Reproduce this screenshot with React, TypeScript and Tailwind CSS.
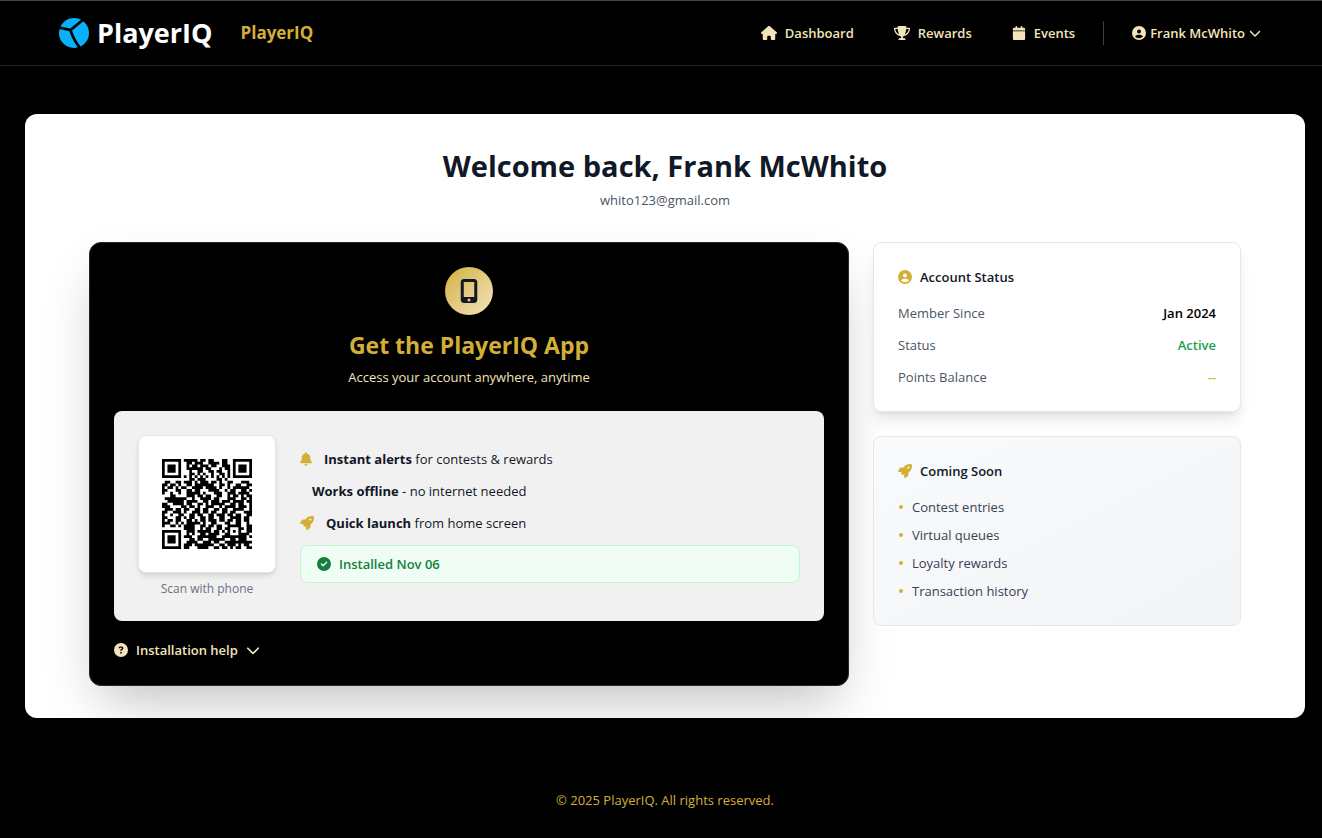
import type { ReactNode } from "react";
import {
  FaBell,
  FaCalendar,
  FaChevronDown,
  FaCircleCheck,
  FaCircleQuestion,
  FaCircleUser,
  FaHouse,
  FaMobileScreenButton,
  FaRocket,
  FaTrophy,
} from "react-icons/fa6";

const QR_ROWS = [
  "#######.#####.##.##...##..#######",
  "#.....#..##.###..####.##..#.....#",
  "#.###.#..#.##.###.##..###.#.###.#",
  "#.###.#..######.##...#.##.#.###.#",
  "#.###.#...#..##..##.##..#.#.###.#",
  "#.....#...##.#.#..#..##.#.#.....#",
  "#######.#.#.#.#.#.#.#.#.#.#######",
  "..........##.###....##.#.........",
  ".##..##.###.#.###.##.#..##...###.",
  "##.##.#..##.#######..##.#..##..##",
  "#.##.#.##..####.####.#..#.######.",
  "##...##..##.##...####..#.##..##.#",
  "#..#..#..#####.#...###..###.####.",
  "...##....###.##.##..##..#.##.#.##",
  ".########..#..####.##...###..##.#",
  "..######.####..##.###.###.####.##",
  "##..####.##..##.#.#####..##.##..#",
  "###....##.##.#..###..#.####.###.#",
  ".###.##.##..##.##..##.##..####..#",
  "##..###.#..###.##.##..##.##...###",
  "#..#..##..##.##..##.###.##.##..##",
  "##...##.#.##..##.##..##..####.##.",
  "#.##.##..##.#.##.###.##.##.##.##.",
  "###..#.#.#####.#..##...##..##..#.",
  "#..##.#.####..##.##.##..#####..##",
  "........####..#.##..##.##...##.##",
  "#######..###.#####.##.#.#.#.#..##",
  "#.....#..#.#..##.####..##...####.",
  "#.###.#.###..#######..#########.#",
  "#.###.#...##.##..######..##.###..",
  "#.###.#..####..###.##..##########",
  "#.....#.###.#######..##.###.#.##.",
  "#######.##...####..##.##.#.##..##",
];

const QR_PATH = QR_ROWS.map((row, y) =>
  [...row].map((cell, x) => (cell === "#" ? `M${x} ${y}h1v1h-1z` : "")).join(""),
).join("");

function QrCode() {
  return (
    <svg viewBox="0 0 33 33" className="size-[90px]" role="img" aria-label="QR code" shapeRendering="geometricPrecision">
      <path d={QR_PATH} fill="#000" />
    </svg>
  );
}

function LogoMark() {
  return (
    <svg viewBox="0 0 30 30" className="size-[30px]" aria-hidden="true">
      <circle cx="15" cy="15" r="15" fill="#08b2fb" />
      <path d="M0 9.500 L11.500 12 L25 1 M11.500 12 Q14 21 21 30" fill="none" stroke="#000" strokeWidth="2.800" />
    </svg>
  );
}

function NavLink({ icon, children }: { icon: ReactNode; children: ReactNode }) {
  return (
    <a href="#" className="flex items-center gap-2">
      {icon}
      {children}
    </a>
  );
}

function Feature({ icon, title, children }: { icon?: ReactNode; title: string; children: ReactNode }) {
  return (
    <li className="flex items-center gap-3">
      <span className="text-[#d4af37]">{icon}</span>
      <span>
        <strong className="font-bold">{title}</strong> {children}
      </span>
    </li>
  );
}

function StatusRow({ label, children }: { label: string; children: ReactNode }) {
  return (
    <div className="flex justify-between">
      <dt className="text-gray-600">{label}</dt>
      {children}
    </div>
  );
}

const UPCOMING = ["Contest entries", "Virtual queues", "Loyalty rewards", "Transaction history"];

export default function App() {
  return (
    <div className="min-h-screen bg-black font-['Open_Sans','Noto_Sans',sans-serif] text-[13px] leading-5 text-[#111827]">
      <header className="flex h-[66px] items-center border-t border-b border-t-[#444] border-b-[#1f2937] pr-[61px] pl-[59px]">
        <a href="#" className="flex items-center gap-2 text-[27px] leading-8 font-bold text-white">
          <LogoMark />
          PlayerIQ
        </a>
        <span className="ml-7 text-[17px] leading-7 font-bold text-[#d4af37]">PlayerIQ</span>
        <nav className="ml-auto flex items-center font-semibold text-[#f4e4bc]">
          <div className="flex items-center gap-10">
            <NavLink icon={<FaHouse className="size-4" />}>Dashboard</NavLink>
            <NavLink icon={<FaTrophy className="size-4" />}>Rewards</NavLink>
            <NavLink icon={<FaCalendar className="size-[14px]" />}>Events</NavLink>
          </div>
          <div className="ml-7 h-6 w-px bg-gray-700" />
          <button type="button" className="ml-7 flex items-center gap-1">
            <FaCircleUser className="size-[14px]" />
            Frank McWhito
            <FaChevronDown className="size-3" />
          </button>
        </nav>
      </header>

      <main className="py-12 pr-[17px] pl-[25px]">
        <div className="rounded-xl bg-white px-16 py-8">
          <div className="mb-8 text-center">
            <h1 className="mb-1 text-[29px] leading-10 font-bold">Welcome back, Frank McWhito</h1>
            <p className="text-gray-600">whito123@gmail.com</p>
          </div>

          <div className="grid grid-cols-3 items-start gap-6">
            <section className="col-span-2 rounded-xl border border-gray-800 bg-black p-6 shadow-2xl">
              <div className="mb-6 flex flex-col items-center">
                <div className="mb-3 flex size-12 items-center justify-center rounded-full bg-linear-to-br from-[#d4af37] to-[#f4e4bc]">
                  <FaMobileScreenButton className="size-6" />
                </div>
                <h2 className="mb-1 text-[23px] leading-9 font-bold text-[#d4af37]">Get the PlayerIQ App</h2>
                <p className="text-[#f4e4bc]">Access your account anywhere, anytime</p>
              </div>

              <div className="flex items-center gap-6 rounded-lg bg-[#f1f1f1] p-6">
                <div className="flex flex-col items-center">
                  <div className="flex size-[138px] items-center justify-center rounded-lg border border-gray-200 bg-white shadow-md">
                    <QrCode />
                  </div>
                  <p className="mt-2 text-[12px] leading-4 text-gray-500">Scan with phone</p>
                </div>
                <div className="flex-1">
                  <ul className="space-y-3">
                    <Feature icon={<FaBell className="h-[14px] w-3" />} title="Instant alerts">
                      for contests &amp; rewards
                    </Feature>
                    <Feature title="Works offline">- no internet needed</Feature>
                    <Feature icon={<FaRocket className="size-[14px]" />} title="Quick launch">
                      from home screen
                    </Feature>
                  </ul>
                  <div className="mt-3 flex items-center gap-2 rounded-lg border border-[#bbf7d0] bg-[#f0fdf4] px-4 py-2 font-semibold text-[#15803d]">
                    <FaCircleCheck className="size-[14px]" />
                    Installed Nov 06
                  </div>
                </div>
              </div>

              <button type="button" className="mt-[18px] flex h-[22px] items-center gap-2 font-semibold text-[#f4e4bc]">
                <FaCircleQuestion className="size-[14px]" />
                Installation help
                <FaChevronDown className="size-[14px]" />
              </button>
            </section>

            <div className="space-y-6">
              <section className="rounded-lg border border-gray-200 bg-white p-6 shadow-lg">
                <h3 className="mb-4 flex items-center gap-2 font-semibold">
                  <FaCircleUser className="size-[14px] text-[#d4af37]" />
                  Account Status
                </h3>
                <dl className="space-y-3">
                  <StatusRow label="Member Since">
                    <dd className="font-semibold text-black">Jan 2024</dd>
                  </StatusRow>
                  <StatusRow label="Status">
                    <dd className="font-semibold text-[#16a34a]">Active</dd>
                  </StatusRow>
                  <StatusRow label="Points Balance">
                    <dd className="font-semibold text-[#d4af37]">--</dd>
                  </StatusRow>
                </dl>
              </section>

              <section className="rounded-lg border border-gray-200 bg-linear-to-br from-gray-50 to-gray-100 p-6">
                <h3 className="mb-4 flex items-center gap-2 font-semibold">
                  <FaRocket className="size-[14px] text-[#d4af37]" />
                  Coming Soon
                </h3>
                <ul className="space-y-2 text-gray-700">
                  {UPCOMING.map((item) => (
                    <li key={item} className="flex items-center gap-2">
                      <span className="flex w-[6px] justify-center">
                        <span className="size-1 rounded-full bg-[#d4af37]" />
                      </span>
                      {item}
                    </li>
                  ))}
                </ul>
              </section>
            </div>
          </div>
        </div>
      </main>

      <footer className="py-6 pr-[17px] pl-[25px] text-center text-[#d4af37]">
        © 2025 PlayerIQ. All rights reserved.
      </footer>
    </div>
  );
}
